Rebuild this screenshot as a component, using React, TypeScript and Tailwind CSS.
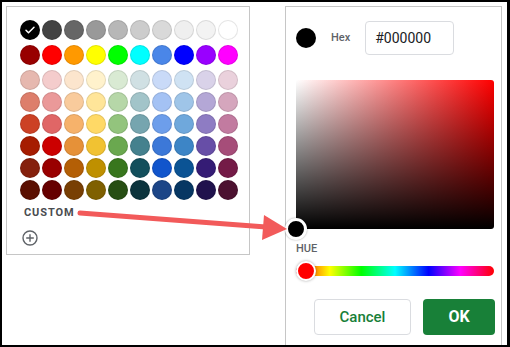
import React from "react";

const rows: string[][] = [
  ["#000000", "#434343", "#666666", "#999999", "#b7b7b7", "#cccccc", "#d9d9d9", "#efefef", "#f3f3f3", "#ffffff"],
  ["#980000", "#ff0000", "#ff9900", "#ffff00", "#00ff00", "#00ffff", "#4a86e8", "#0000ff", "#9900ff", "#ff00ff"],
  ["#e6b8af", "#f4cccc", "#fce5cd", "#fff2cc", "#d9ead3", "#d0e0e3", "#c9daf8", "#cfe2f3", "#d9d2e9", "#ead1dc"],
  ["#dd7e6b", "#ea9999", "#f9cb9c", "#ffe599", "#b6d7a8", "#a2c4c9", "#a4c2f4", "#9fc5e8", "#b4a7d6", "#d5a6bd"],
  ["#cc4125", "#e06666", "#f6b26b", "#ffd966", "#93c47d", "#76a5af", "#6d9eeb", "#6fa8dc", "#8e7cc3", "#c27ba0"],
  ["#a61c00", "#cc0000", "#e69138", "#f1c232", "#6aa84f", "#45818e", "#3c78d8", "#3d85c6", "#674ea7", "#a64d79"],
  ["#85200c", "#990000", "#b45f06", "#bf9000", "#38761d", "#134f5c", "#1155cc", "#0b5394", "#351c75", "#741b47"],
  ["#5b0f00", "#660000", "#783f04", "#7f6000", "#274e13", "#0c343d", "#1c4587", "#073763", "#20124d", "#4c1130"],
];

const rowMargins = ["mt-0", "mt-[5px]", "mt-[5px]", "mt-[2px]", "mt-[2px]", "mt-[2px]", "mt-[2px]", "mt-[2px]"];

function Swatch({ color, checked }: { color: string; checked?: boolean }) {
  return (
    <div
      className="w-5 h-5 rounded-full flex items-center justify-center border border-black/10"
      style={{ backgroundColor: color }}
    >
      {checked && (
        <svg width="12" height="12" viewBox="0 0 24 24" fill="none">
          <path d="M4 12.5l5 5L20 6.5" stroke="#fff" strokeWidth="3" strokeLinecap="round" strokeLinejoin="round" />
        </svg>
      )}
    </div>
  );
}

export default function App() {
  return (
    <div
      className="relative w-[510px] h-[347px] overflow-hidden bg-white border-t-2 border-l-2 border-b-2 border-r-[3px] border-black flex items-start"
      style={{ fontFamily: "Roboto, 'Liberation Sans', sans-serif" }}
    >
      {/* Left palette panel */}
      <div className="ml-[4px] mt-[4px] w-[244px] h-[249px] border border-[#c6c6c6] pl-[13px] pt-[13px] flex flex-col">
        {rows.map((r, i) => (
          <div key={i} className={`flex gap-[2px] ${rowMargins[i]}`}>
            {r.map((c, j) => (
              <Swatch key={j} color={c} checked={i === 0 && j === 0} />
            ))}
          </div>
        ))}
        <div className="mt-[6px] ml-[4px] text-[11px] leading-[13px] font-bold tracking-[0.9px] text-[#4a4c50]">
          CUSTOM
        </div>
        <div className="mt-[11px] ml-[2px]">
          <svg width="16" height="16" viewBox="0 0 16 16" fill="none">
            <circle cx="8" cy="8" r="7" stroke="#5f6368" strokeWidth="1.4" />
            <path d="M8 4.2v7.6M4.2 8h7.6" stroke="#5f6368" strokeWidth="1.4" />
          </svg>
        </div>
      </div>

      {/* Right custom color panel */}
      <div className="ml-[35px] mt-[4px] w-[217px] self-stretch border-t border-l border-r border-[#c6c6c6] pl-[10px] pt-[14px] flex flex-col">
        <div className="flex items-center h-[34px]">
          <div className="w-5 h-5 rounded-full bg-black" />
          <div className="ml-[15px] text-[11px] font-medium text-[#5f6368]">Hex</div>
          <div className="ml-[15px] w-[89px] h-[34px] border border-[#dadce0] rounded-[4px] pl-[9px] flex items-center text-[14px] text-[#202124]">
            #000000
          </div>
        </div>

        <div
          className="relative mt-[25px] w-[198px] h-[149px] rounded-[3px]"
          style={{
            background: "linear-gradient(to top, #000, rgba(0,0,0,0)), linear-gradient(to right, #fff, #f00)",
          }}
        >
          <div className="absolute left-[-11px] bottom-[-11px] w-[22px] h-[22px] rounded-full bg-black border-[3px] border-white shadow-[0_0_2px_rgba(0,0,0,0.35)]" />
        </div>

        <div className="mt-[13px] text-[11px] leading-[13px] font-medium text-[#5f6368]">HUE</div>

        <div
          className="relative mt-[11px] w-[198px] h-[10px] rounded-full"
          style={{
            background: "linear-gradient(to right, #f00 0%, #ff0 17%, #0f0 33%, #0ff 50%, #00f 67%, #f0f 83%, #f00 100%)",
          }}
        >
          <div className="absolute left-0 top-[-5px] w-5 h-5 rounded-full bg-[#ff0000] border-2 border-white shadow-[0_0_3px_rgba(0,0,0,0.35)]" />
        </div>

        <div className="mt-[23px] flex gap-[12px] ml-[18px]">
          <div className="w-[97px] h-[36px] rounded-[4px] border border-[#dadce0] flex items-center justify-center text-[15px] font-medium text-[#188038]">
            Cancel
          </div>
          <div className="w-[72px] h-[36px] rounded-[4px] bg-[#188038] flex items-center justify-center text-[16px] font-bold text-white">
            OK
          </div>
        </div>
      </div>

      {/* Red arrow overlay */}
      <svg className="absolute left-[-2px] top-[-2px]" width="510" height="347" viewBox="0 0 510 347">
        <line x1="80" y1="213" x2="266" y2="227" stroke="#f25a5a" strokeWidth="5" strokeLinecap="round" />
        <polygon points="287,229 262,240 264,215" fill="#f25a5a" />
      </svg>
    </div>
  );
}
